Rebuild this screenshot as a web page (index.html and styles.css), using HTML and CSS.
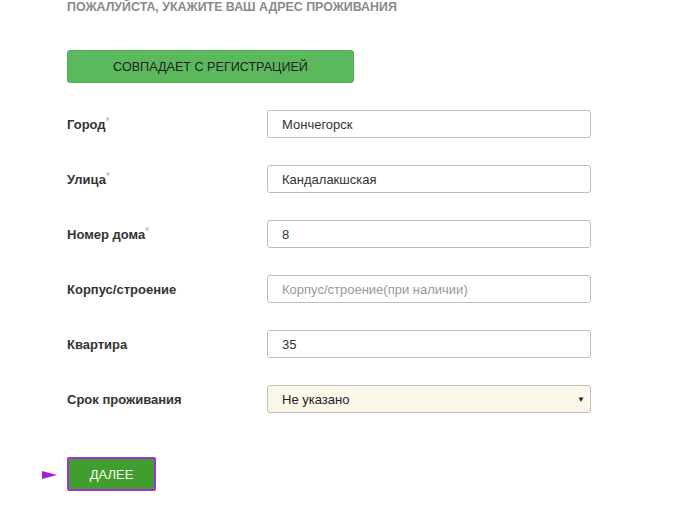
FILE: index.html
```html
<!DOCTYPE html>
<html lang="ru">
<head>
<meta charset="utf-8">
<link rel="stylesheet" href="styles.css">
</head>
<body>
<div class="page">
  <h2 class="title">ПОЖАЛУЙСТА, УКАЖИТЕ ВАШ АДРЕС ПРОЖИВАНИЯ</h2>
  <button class="btn-same" type="button">СОВПАДАЕТ С РЕГИСТРАЦИЕЙ</button>
  <form class="form">
    <div class="row">
      <label class="label">Город<span class="req">*</span></label>
      <input class="field" type="text" value="Мончегорск">
    </div>
    <div class="row">
      <label class="label">Улица<span class="req">*</span></label>
      <input class="field" type="text" value="Кандалакшская">
    </div>
    <div class="row">
      <label class="label">Номер дома<span class="req">*</span></label>
      <input class="field" type="text" value="8">
    </div>
    <div class="row">
      <label class="label">Корпус/строение</label>
      <input class="field" type="text" placeholder="Корпус/строение(при наличии)">
    </div>
    <div class="row">
      <label class="label">Квартира</label>
      <input class="field" type="text" value="35">
    </div>
    <div class="row">
      <label class="label">Срок проживания</label>
      <div class="select">
        <span>Не указано</span>
        <span class="caret">▼</span>
      </div>
    </div>
  </form>
  <div class="next-wrap">
    <span class="pointer"></span>
    <button class="btn-next" type="button">ДАЛЕЕ</button>
  </div>
</div>
</body>
</html>
```
FILE: styles.css
```css
html, body {
  margin: 0;
  padding: 0;
  background: #fff;
}
body {
  font-family: "Liberation Sans", Arial, sans-serif;
  font-size: 13px;
  color: #333;
}
.page {
  padding-left: 67px;
  width: 524px;
}
.title {
  margin: 0;
  font-size: 12.4px;
  line-height: 15px;
  font-weight: bold;
  color: #8a8a8a;
}
.btn-same {
  display: block;
  margin-top: 35px;
  width: 287px;
  height: 33px;
  background: #5cb85c;
  border: 1px solid #56ad56;
  border-radius: 3px;
  font-family: inherit;
  font-size: 12.6px;
  color: #1e1e1e;
  padding: 0;
}
.form {
  display: flex;
  flex-direction: column;
  gap: 27px;
  margin-top: 27px;
}
.row {
  display: flex;
  align-items: center;
  height: 28px;
}
.label {
  width: 200px;
  flex: none;
  font-weight: bold;
  color: #333;
}
.req {
  color: #aaa;
  font-weight: normal;
  font-size: 10px;
  vertical-align: 4px;
}
.field {
  box-sizing: border-box;
  width: 324px;
  height: 28px;
  border: 1px solid #bdbdbd;
  border-radius: 3px;
  padding: 0 14px;
  font-family: inherit;
  font-size: 13px;
  color: #333;
  background: #fff;
}
.field::placeholder {
  color: #999;
}
.select {
  box-sizing: border-box;
  width: 324px;
  height: 28px;
  border: 1px solid #bdbdbd;
  border-radius: 3px;
  padding: 0 5px 0 14px;
  display: flex;
  align-items: center;
  justify-content: space-between;
  background: #fdf7ea;
  color: #222;
}
.caret {
  font-size: 8px;
  color: #222;
}
.next-wrap {
  position: relative;
  margin-top: 44px;
}
.pointer {
  position: absolute;
  left: -25px;
  top: 14px;
  width: 0;
  height: 0;
  border-top: 4px solid transparent;
  border-bottom: 4px solid transparent;
  border-left: 15px solid #a020d8;
}
.btn-next {
  display: block;
  box-sizing: border-box;
  width: 89px;
  height: 34px;
  background: #3f9e2d;
  border: 2px solid #a22fd8;
  border-radius: 2px;
  color: #f4fff0;
  font-family: inherit;
  font-size: 13px;
  padding: 0;
}
```
